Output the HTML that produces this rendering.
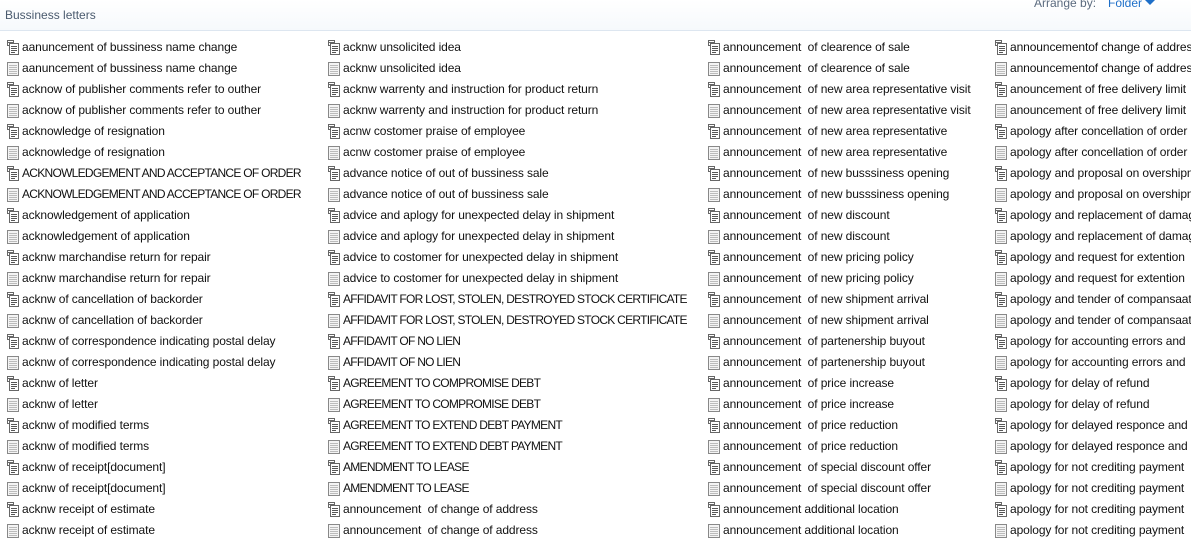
<!DOCTYPE html>
<html><head><meta charset="utf-8">
<style>
html,body{margin:0;padding:0;width:1191px;height:544px;overflow:hidden;background:#fff;font-family:"Segoe UI","Liberation Sans",sans-serif;}
.hdr{position:absolute;left:0;top:0;width:1191px;height:30px;background:linear-gradient(#fff,#f6f9fc);border-bottom:1px solid #dde6f0;}
.title{position:absolute;left:5px;top:8px;font-size:12px;color:#4a5a6e;}
.arr{position:absolute;left:1034px;top:-4px;font-size:12px;color:#5a6a7e;}
.fold{position:absolute;left:1108px;top:-4px;font-size:12px;color:#1e6fc8;}
.tri{position:absolute;left:1145px;top:0px;width:0;height:0;border-left:5px solid transparent;border-right:5px solid transparent;border-top:5px solid #1e6fc8;}
.col{position:absolute;top:37px;font-size:12px;color:#111;line-height:21px;white-space:nowrap;letter-spacing:-0.1px;}
.col div{height:21px;position:relative;padding-left:17px;}
.col div.u{letter-spacing:-0.72px;}
.col svg{position:absolute;left:0;top:2px;}
</style></head><body>
<svg width="0" height="0" style="position:absolute">
<symbol id="a" viewBox="0 0 16 16"><path d="M2.5 1.5h6v2h-6z" fill="#fff" stroke="#666"/><path d="M2.5 3.5v3h2" fill="none" stroke="#666"/><path d="M4.5 4.5h9v11h-9z" fill="#fff" stroke="#666"/><path d="M6 7.5h6M6 9.5h6M6 11.5h6M6 13.5h4" stroke="#555"/></symbol>
<symbol id="b" viewBox="0 0 16 16"><path d="M2.5 2.5h11v13h-11z" fill="#f4f4f4" stroke="#888"/><path d="M3 2.5h10" stroke="#888" stroke-dasharray="1 1"/><path d="M4 5.5h8M4 7.5h8M4 9.5h8M4 11.5h8M4 13.5h8" stroke="#bbb"/></symbol>
</svg>
<div class="hdr"><div class="title">Bussiness letters</div><div class="arr">Arrange by:</div><div class="fold">Folder</div><div class="tri"></div></div>

<div class="col" style="left:5px">
<div><svg width="16" height="16"><use href="#a"/></svg>aanuncement of bussiness name change</div>
<div><svg width="16" height="16"><use href="#b"/></svg>aanuncement of bussiness name change</div>
<div><svg width="16" height="16"><use href="#a"/></svg>acknow of publisher comments refer to outher</div>
<div><svg width="16" height="16"><use href="#b"/></svg>acknow of publisher comments refer to outher</div>
<div><svg width="16" height="16"><use href="#a"/></svg>acknowledge of resignation</div>
<div><svg width="16" height="16"><use href="#b"/></svg>acknowledge of resignation</div>
<div class="u"><svg width="16" height="16"><use href="#a"/></svg>ACKNOWLEDGEMENT AND ACCEPTANCE OF ORDER</div>
<div class="u"><svg width="16" height="16"><use href="#b"/></svg>ACKNOWLEDGEMENT AND ACCEPTANCE OF ORDER</div>
<div><svg width="16" height="16"><use href="#a"/></svg>acknowledgement of application</div>
<div><svg width="16" height="16"><use href="#b"/></svg>acknowledgement of application</div>
<div><svg width="16" height="16"><use href="#a"/></svg>acknw marchandise return for repair</div>
<div><svg width="16" height="16"><use href="#b"/></svg>acknw marchandise return for repair</div>
<div><svg width="16" height="16"><use href="#a"/></svg>acknw of cancellation of backorder</div>
<div><svg width="16" height="16"><use href="#b"/></svg>acknw of cancellation of backorder</div>
<div><svg width="16" height="16"><use href="#a"/></svg>acknw of correspondence indicating postal delay</div>
<div><svg width="16" height="16"><use href="#b"/></svg>acknw of correspondence indicating postal delay</div>
<div><svg width="16" height="16"><use href="#a"/></svg>acknw of letter</div>
<div><svg width="16" height="16"><use href="#b"/></svg>acknw of letter</div>
<div><svg width="16" height="16"><use href="#a"/></svg>acknw of modified terms</div>
<div><svg width="16" height="16"><use href="#b"/></svg>acknw of modified terms</div>
<div><svg width="16" height="16"><use href="#a"/></svg>acknw of receipt[document]</div>
<div><svg width="16" height="16"><use href="#b"/></svg>acknw of receipt[document]</div>
<div><svg width="16" height="16"><use href="#a"/></svg>acknw receipt of estimate</div>
<div><svg width="16" height="16"><use href="#b"/></svg>acknw receipt of estimate</div>
</div>

<div class="col" style="left:326px">
<div><svg width="16" height="16"><use href="#a"/></svg>acknw unsolicited idea</div>
<div><svg width="16" height="16"><use href="#b"/></svg>acknw unsolicited idea</div>
<div><svg width="16" height="16"><use href="#a"/></svg>acknw warrenty and instruction for product return</div>
<div><svg width="16" height="16"><use href="#b"/></svg>acknw warrenty and instruction for product return</div>
<div><svg width="16" height="16"><use href="#a"/></svg>acnw costomer praise of employee</div>
<div><svg width="16" height="16"><use href="#b"/></svg>acnw costomer praise of employee</div>
<div><svg width="16" height="16"><use href="#a"/></svg>advance notice of out of bussiness sale</div>
<div><svg width="16" height="16"><use href="#b"/></svg>advance notice of out of bussiness sale</div>
<div><svg width="16" height="16"><use href="#a"/></svg>advice and aplogy for unexpected delay in shipment</div>
<div><svg width="16" height="16"><use href="#b"/></svg>advice and aplogy for unexpected delay in shipment</div>
<div><svg width="16" height="16"><use href="#a"/></svg>advice to costomer for unexpected delay in shipment</div>
<div><svg width="16" height="16"><use href="#b"/></svg>advice to costomer for unexpected delay in shipment</div>
<div class="u"><svg width="16" height="16"><use href="#a"/></svg>AFFIDAVIT FOR LOST, STOLEN, DESTROYED STOCK CERTIFICATE</div>
<div class="u"><svg width="16" height="16"><use href="#b"/></svg>AFFIDAVIT FOR LOST, STOLEN, DESTROYED STOCK CERTIFICATE</div>
<div class="u"><svg width="16" height="16"><use href="#a"/></svg>AFFIDAVIT OF NO LIEN</div>
<div class="u"><svg width="16" height="16"><use href="#b"/></svg>AFFIDAVIT OF NO LIEN</div>
<div class="u"><svg width="16" height="16"><use href="#a"/></svg>AGREEMENT TO COMPROMISE DEBT</div>
<div class="u"><svg width="16" height="16"><use href="#b"/></svg>AGREEMENT TO COMPROMISE DEBT</div>
<div class="u"><svg width="16" height="16"><use href="#a"/></svg>AGREEMENT TO EXTEND DEBT PAYMENT</div>
<div class="u"><svg width="16" height="16"><use href="#b"/></svg>AGREEMENT TO EXTEND DEBT PAYMENT</div>
<div class="u"><svg width="16" height="16"><use href="#a"/></svg>AMENDMENT TO LEASE</div>
<div class="u"><svg width="16" height="16"><use href="#b"/></svg>AMENDMENT TO LEASE</div>
<div><svg width="16" height="16"><use href="#a"/></svg>announcement&nbsp; of change of address</div>
<div><svg width="16" height="16"><use href="#b"/></svg>announcement&nbsp; of change of address</div>
</div>

<div class="col" style="left:706px">
<div><svg width="16" height="16"><use href="#a"/></svg>announcement&nbsp; of clearence of sale</div>
<div><svg width="16" height="16"><use href="#b"/></svg>announcement&nbsp; of clearence of sale</div>
<div><svg width="16" height="16"><use href="#a"/></svg>announcement&nbsp; of new area representative visit</div>
<div><svg width="16" height="16"><use href="#b"/></svg>announcement&nbsp; of new area representative visit</div>
<div><svg width="16" height="16"><use href="#a"/></svg>announcement&nbsp; of new area representative</div>
<div><svg width="16" height="16"><use href="#b"/></svg>announcement&nbsp; of new area representative</div>
<div><svg width="16" height="16"><use href="#a"/></svg>announcement&nbsp; of new busssiness opening</div>
<div><svg width="16" height="16"><use href="#b"/></svg>announcement&nbsp; of new busssiness opening</div>
<div><svg width="16" height="16"><use href="#a"/></svg>announcement&nbsp; of new discount</div>
<div><svg width="16" height="16"><use href="#b"/></svg>announcement&nbsp; of new discount</div>
<div><svg width="16" height="16"><use href="#a"/></svg>announcement&nbsp; of new pricing policy</div>
<div><svg width="16" height="16"><use href="#b"/></svg>announcement&nbsp; of new pricing policy</div>
<div><svg width="16" height="16"><use href="#a"/></svg>announcement&nbsp; of new shipment arrival</div>
<div><svg width="16" height="16"><use href="#b"/></svg>announcement&nbsp; of new shipment arrival</div>
<div><svg width="16" height="16"><use href="#a"/></svg>announcement&nbsp; of partenership buyout</div>
<div><svg width="16" height="16"><use href="#b"/></svg>announcement&nbsp; of partenership buyout</div>
<div><svg width="16" height="16"><use href="#a"/></svg>announcement&nbsp; of price increase</div>
<div><svg width="16" height="16"><use href="#b"/></svg>announcement&nbsp; of price increase</div>
<div><svg width="16" height="16"><use href="#a"/></svg>announcement&nbsp; of price reduction</div>
<div><svg width="16" height="16"><use href="#b"/></svg>announcement&nbsp; of price reduction</div>
<div><svg width="16" height="16"><use href="#a"/></svg>announcement&nbsp; of special discount offer</div>
<div><svg width="16" height="16"><use href="#b"/></svg>announcement&nbsp; of special discount offer</div>
<div><svg width="16" height="16"><use href="#a"/></svg>announcement additional location</div>
<div><svg width="16" height="16"><use href="#b"/></svg>announcement additional location</div>
</div>

<div class="col" style="left:993px">
<div><svg width="16" height="16"><use href="#a"/></svg>announcementof change of address</div>
<div><svg width="16" height="16"><use href="#b"/></svg>announcementof change of address</div>
<div><svg width="16" height="16"><use href="#a"/></svg>anouncement of free delivery limit</div>
<div><svg width="16" height="16"><use href="#b"/></svg>anouncement of free delivery limit</div>
<div><svg width="16" height="16"><use href="#a"/></svg>apology after concellation of order</div>
<div><svg width="16" height="16"><use href="#b"/></svg>apology after concellation of order</div>
<div><svg width="16" height="16"><use href="#a"/></svg>apology and proposal on overshipment</div>
<div><svg width="16" height="16"><use href="#b"/></svg>apology and proposal on overshipment</div>
<div><svg width="16" height="16"><use href="#a"/></svg>apology and replacement of damaged</div>
<div><svg width="16" height="16"><use href="#b"/></svg>apology and replacement of damaged</div>
<div><svg width="16" height="16"><use href="#a"/></svg>apology and request for extention</div>
<div><svg width="16" height="16"><use href="#b"/></svg>apology and request for extention</div>
<div><svg width="16" height="16"><use href="#a"/></svg>apology and tender of compansaation</div>
<div><svg width="16" height="16"><use href="#b"/></svg>apology and tender of compansaation</div>
<div><svg width="16" height="16"><use href="#a"/></svg>apology for accounting errors and</div>
<div><svg width="16" height="16"><use href="#b"/></svg>apology for accounting errors and</div>
<div><svg width="16" height="16"><use href="#a"/></svg>apology for delay of refund</div>
<div><svg width="16" height="16"><use href="#b"/></svg>apology for delay of refund</div>
<div><svg width="16" height="16"><use href="#a"/></svg>apology for delayed responce and</div>
<div><svg width="16" height="16"><use href="#b"/></svg>apology for delayed responce and</div>
<div><svg width="16" height="16"><use href="#a"/></svg>apology for not crediting payment</div>
<div><svg width="16" height="16"><use href="#b"/></svg>apology for not crediting payment</div>
<div><svg width="16" height="16"><use href="#a"/></svg>apology for not crediting payment</div>
<div><svg width="16" height="16"><use href="#b"/></svg>apology for not crediting payment</div>
</div>
</body></html>
